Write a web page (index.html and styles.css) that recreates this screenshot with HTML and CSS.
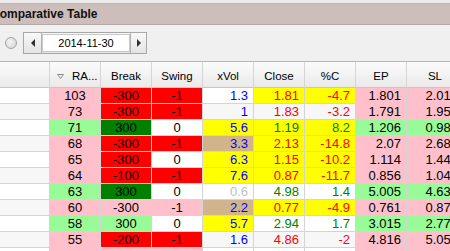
FILE: index.html
```html
<!DOCTYPE html>
<html lang="en">
<head>
  <meta charset="UTF-8">
  <title>Comparative Table</title>
  <link rel="stylesheet" href="styles.css">
</head>
<body>

  <div class="topstrip"></div>
  <div class="titlebar"><span class="title">Comparative Table</span></div>

  <div class="toolbar">
    <div class="radio"></div>
    <div class="spinner">
      <div class="spin-btn left"><i class="arrow-left"></i></div>
      <div class="spin-field">2014-11-30</div>
      <div class="spin-btn right"><i class="arrow-right"></i></div>
    </div>
  </div>

  <table class="grid">
    <colgroup>
      <col class="col-first">
      <col class="col-data"><col class="col-data"><col class="col-data"><col class="col-data">
      <col class="col-data"><col class="col-data"><col class="col-data"><col class="col-last">
    </colgroup>
    <thead>
      <tr>
        <th></th>
        <th class="sort"><svg class="sort-icon" width="7" height="5" viewBox="0 0 7 5"><path d="M0.5 0.5 H6.5 L3.5 4.5 Z" fill="none" stroke="#8a8a8a" stroke-width="1"/></svg>RA...</th>
        <th>Break</th>
        <th>Swing</th>
        <th>xVol</th>
        <th>Close</th>
        <th>%C</th>
        <th>EP</th>
        <th>SL</th>
      </tr>
    </thead>
    <tbody>
      <tr>
        <td></td>
        <td class="c pk">103</td><td class="c rd">-300</td><td class="c rd">-1</td>
        <td class="r wt tb">1.3</td><td class="r ye tr">1.81</td><td class="r ye tr">-4.7</td>
        <td class="r pk">1.801</td><td class="r pk">2.017</td>
      </tr>
      <tr>
        <td></td>
        <td class="c pk">73</td><td class="c rd">-300</td><td class="c rd">-1</td>
        <td class="r tb">1</td><td class="r tr">1.83</td><td class="r tr">-3.2</td>
        <td class="r pk">1.791</td><td class="r pk">1.957</td>
      </tr>
      <tr>
        <td></td>
        <td class="c lg">71</td><td class="c dg">300</td><td class="c wt">0</td>
        <td class="r ye tb">5.6</td><td class="r ye tg">1.19</td><td class="r ye tg">8.2</td>
        <td class="r lg">1.206</td><td class="r lg">0.985</td>
      </tr>
      <tr>
        <td></td>
        <td class="c pk">68</td><td class="c rd">-300</td><td class="c rd">-1</td>
        <td class="r tn tb">3.3</td><td class="r ye tr">2.13</td><td class="r ye tr">-14.8</td>
        <td class="r pk">2.07</td><td class="r pk">2.687</td>
      </tr>
      <tr>
        <td></td>
        <td class="c pk">65</td><td class="c rd">-300</td><td class="c wt">0</td>
        <td class="r ye tb">6.3</td><td class="r ye tr">1.15</td><td class="r ye tr">-10.2</td>
        <td class="r pk">1.114</td><td class="r pk">1.444</td>
      </tr>
      <tr>
        <td></td>
        <td class="c pk">64</td><td class="c rd">-100</td><td class="c rd">-1</td>
        <td class="r ye tb">7.6</td><td class="r ye tr">0.87</td><td class="r ye tr">-11.7</td>
        <td class="r pk">0.856</td><td class="r pk">1.047</td>
      </tr>
      <tr>
        <td></td>
        <td class="c lg">63</td><td class="c dg">300</td><td class="c wt">0</td>
        <td class="r wt tx">0.6</td><td class="r wt tg">4.98</td><td class="r wt tg">1.4</td>
        <td class="r lg">5.005</td><td class="r lg">4.633</td>
      </tr>
      <tr>
        <td></td>
        <td class="c pk">60</td><td class="c pk">-300</td><td class="c pk">-1</td>
        <td class="r tn tb">2.2</td><td class="r ye tr">0.77</td><td class="r ye tr">-4.9</td>
        <td class="r pk">0.761</td><td class="r pk">0.879</td>
      </tr>
      <tr>
        <td></td>
        <td class="c lg">58</td><td class="c lg">300</td><td class="c wt">0</td>
        <td class="r ye tb">5.7</td><td class="r wt tg">2.94</td><td class="r wt tg">1.7</td>
        <td class="r lg">3.015</td><td class="r lg">2.772</td>
      </tr>
      <tr>
        <td></td>
        <td class="c pk">55</td><td class="c rd">-200</td><td class="c rd">-1</td>
        <td class="r tb">1.6</td><td class="r tr">4.86</td><td class="r tr">-2</td>
        <td class="r pk">4.816</td><td class="r pk">5.055</td>
      </tr>
      <tr>
        <td></td>
        <td class="c pk">53</td><td class="c pk">-300</td><td class="c pk">-1</td>
        <td class="r wt tb">1.2</td><td class="r wt tr">3.41</td><td class="r wt tr">-1.6</td>
        <td class="r pk">3.392</td><td class="r pk">3.518</td>
      </tr>
    </tbody>
  </table>

</body>
</html>
```

FILE: styles.css
```css
* {
  margin: 0;
  padding: 0;
  box-sizing: border-box;
}

body {
  font-family: 'Liberation Sans', Arial, sans-serif;
  background-color: #f0f0f0;
  color: #000;
  width: 450px;
  height: 251px;
  overflow: hidden;
}

.topstrip {
  height: 4px;
  background-color: #ececec;
  border-bottom: 1px solid #b8b8b8;
}

.titlebar {
  height: 21px;
  background-color: #cdbdbb;
  border-bottom: 1px solid #b0a8a8;
  overflow: hidden;
  white-space: nowrap;
}

.title {
  display: block;
  margin-left: -9px;
  font-size: 12px;
  font-weight: bold;
  line-height: 20px;
  color: #111;
}

.toolbar {
  height: 37px;
  display: flex;
  align-items: center;
  gap: 6px;
  padding-left: 5px;
  border-bottom: 1px solid #b5b5b5;
}

.radio {
  width: 12px;
  height: 12px;
  border-radius: 50%;
  border: 1px solid #a4a4a4;
  background: radial-gradient(circle at 40% 40%, #f6f6f6, #cfcfcf);
}

.spinner {
  display: flex;
  width: 124px;
  height: 22px;
  border: 1px solid #a8a8a8;
  background: linear-gradient(#f8f8f8, #e4e4e4);
}

.spin-btn {
  display: flex;
  align-items: center;
  justify-content: center;
}

.spin-btn.left {
  width: 18px;
  border-right: 1px solid #b4b4b4;
}

.spin-btn.right {
  width: 16px;
  border-left: 1px solid #b4b4b4;
}

.arrow-left {
  border-right: 4px solid #303030;
  border-top: 4px solid transparent;
  border-bottom: 4px solid transparent;
}

.arrow-right {
  border-left: 4px solid #303030;
  border-top: 4px solid transparent;
  border-bottom: 4px solid transparent;
}

.spin-field {
  flex: 1;
  margin: 1px 0;
  background-color: #fff;
  border: 1px solid #c8c8c8;
  font-size: 11px;
  line-height: 16px;
  text-align: center;
}

.grid {
  table-layout: fixed;
  width: 464px;
  border-collapse: separate;
  border-spacing: 0;
  font-size: 13px;
}

.col-first {
  width: 50px;
}

.col-data {
  width: 51px;
}

.col-last {
  width: 57px;
}

.grid th {
  height: 26px;
  padding-top: 3px;
  font-weight: normal;
  font-size: 11.5px;
  text-align: center;
  background: linear-gradient(#fbfbfb 0%, #f3f3f3 50%, #e9e9e9 100%);
  border-right: 1px solid #d6d6d6;
  border-bottom: 1px solid #c8c8c8;
  white-space: nowrap;
  overflow: hidden;
}

.grid th.sort {
  text-align: left;
  padding-left: 7px;
}

.sort-icon {
  margin-right: 8px;
  vertical-align: 1px;
}

.grid td {
  height: 16px;
  line-height: 15px;
  border-right: 1px solid #d4d4d4;
  border-bottom: 1px solid #d4d4d4;
  background-color: #fff;
  white-space: nowrap;
  overflow: hidden;
}

tbody tr:nth-child(even) td {
  background-color: #f7f7f7;
}

.grid td.c {
  text-align: center;
}

.grid td.r {
  text-align: right;
  padding-right: 5px;
}

/* cell colours */
.grid td.pk { background-color: #ffc0cb; }
.grid td.rd { background-color: #ff0000; }
.grid td.lg { background-color: #98fb98; }
.grid td.dg { background-color: #008000; }
.grid td.ye { background-color: #ffff00; }
.grid td.tn { background-color: #d2b48c; }
.grid td.wt { background-color: #ffffff; }

/* text colours */
.tb { color: #0000ff; }
.tr { color: #ff0000; }
.tg { color: #008000; }
.tx { color: #c0c0c0; }
```
